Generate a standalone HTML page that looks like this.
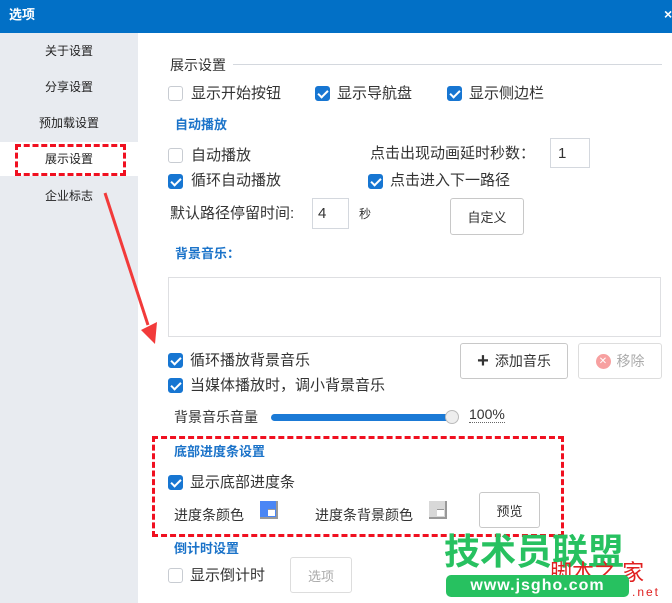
<!DOCTYPE html>
<html><head><meta charset="utf-8"><style>
*{margin:0;padding:0;box-sizing:border-box}
body{width:672px;height:603px;overflow:hidden;background:#fff;position:relative;font-family:"Liberation Sans","Noto Sans CJK SC",sans-serif;color:#333;font-size:15px}
.a{position:absolute;white-space:nowrap;line-height:18px}
.cb{position:absolute;width:15px;height:15px;border-radius:3px;border:1px solid #c8ccd2;background:#fff}
.cb.on{background:#1776d2;border-color:#1776d2}
.cb.on::after{content:"";position:absolute;left:4px;top:1px;width:4px;height:8px;border:solid #fff;border-width:0 2px 2px 0;transform:rotate(45deg)}
.blue{color:#1b73c9;font-weight:bold;font-size:13px}
.btn{position:absolute;border:1px solid #c8c8c8;border-radius:3px;background:#fff;display:flex;align-items:center;justify-content:center;font-size:13px;white-space:nowrap}
.side{position:absolute;left:0;width:138px;text-align:center;font-size:12px;color:#222;line-height:18px}
.sw::after{content:"";position:absolute;right:1px;bottom:1px;width:7px;height:6px;background:#fff;border-top:1px solid #999}
</style></head><body>
<div style="position:absolute;left:0;top:0;width:672px;height:33px;background:#0270c6"></div>
<div class="a" style="left:9px;top:6px;color:#fff;font-size:13px;font-weight:bold">选项</div>
<div class="a" style="left:664px;top:5px;color:#fff;font-size:14px;font-weight:bold">×</div>
<div style="position:absolute;left:0;top:33px;width:138px;height:570px;background:#e8ebf0"></div>
<div style="position:absolute;left:0;top:142px;width:138px;height:34px;background:#fff"></div>
<div class="side" style="top:42px">关于设置</div>
<div class="side" style="top:78px">分享设置</div>
<div class="side" style="top:114px">预加载设置</div>
<div class="side" style="top:150px">展示设置</div>
<div class="side" style="top:187px">企业标志</div>
<div style="position:absolute;left:15px;top:144px;width:111px;height:32px;border:3px dashed #f01020"></div>
<svg style="position:absolute;left:0;top:0" width="672" height="603"><line x1="105" y1="193" x2="148" y2="325" stroke="#f23a3a" stroke-width="3"/><polygon points="141,330 155,344 157,322" fill="#f23a3a"/></svg>

<div class="a" style="left:170px;top:56px;font-size:14px">展示设置</div>
<div style="position:absolute;left:233px;top:64px;width:429px;height:1px;background:#d4d8de"></div>
<div class="cb" style="left:168px;top:86px"></div><div class="a" style="left:191px;top:85px">显示开始按钮</div>
<div class="cb on" style="left:315px;top:86px"></div><div class="a" style="left:337px;top:85px">显示导航盘</div>
<div class="cb on" style="left:447px;top:86px"></div><div class="a" style="left:469px;top:85px">显示侧边栏</div>
<div class="a blue" style="left:175px;top:116px">自动播放</div>
<div class="cb" style="left:168px;top:148px"></div><div class="a" style="left:191px;top:147px">自动播放</div>
<div class="a" style="left:370px;top:145px">点击出现动画延时秒数：</div>
<div style="position:absolute;left:550px;top:138px;width:40px;height:30px;border:1px solid #d4d8de"></div><div class="a" style="left:558px;top:145px">1</div>
<div class="cb on" style="left:168px;top:174px"></div><div class="a" style="left:191px;top:172px">循环自动播放</div>
<div class="cb on" style="left:368px;top:174px"></div><div class="a" style="left:390px;top:172px">点击进入下一路径</div>
<div class="a" style="left:170px;top:205px">默认路径停留时间:</div>
<div style="position:absolute;left:312px;top:198px;width:37px;height:31px;border:1px solid #d4d8de"></div><div class="a" style="left:318px;top:205px">4</div>
<div class="a" style="left:359px;top:205px;font-size:12px">秒</div>
<div class="btn" style="left:450px;top:198px;width:74px;height:37px">自定义</div>
<div class="a blue" style="left:175px;top:245px">背景音乐：</div>
<div style="position:absolute;left:168px;top:277px;width:493px;height:60px;border:1px solid #dedfe2"></div>
<div class="cb on" style="left:168px;top:353px"></div><div class="a" style="left:190px;top:352px">循环播放背景音乐</div>
<div class="btn" style="left:460px;top:343px;width:108px;height:36px;font-size:14px"><b style="font-size:20px;margin-right:6px">+</b>添加音乐</div>
<div class="btn" style="left:578px;top:343px;width:84px;height:36px;color:#aaa;border-color:#ddd;font-size:14px"><span style="display:inline-block;width:15px;height:15px;border-radius:50%;background:#f7a0a0;color:#fff;font-size:10px;line-height:15px;text-align:center;margin-right:6px">✕</span>移除</div>
<div class="cb on" style="left:168px;top:378px"></div><div class="a" style="left:190px;top:377px">当媒体播放时，调小背景音乐</div>
<div class="a" style="left:174px;top:408px;font-size:14px">背景音乐音量</div>
<div style="position:absolute;left:271px;top:414px;width:184px;height:7px;border-radius:4px;background:#1b7ad6"></div>
<div style="position:absolute;left:445px;top:410px;width:14px;height:14px;border-radius:50%;background:#eee;border:1px solid #bbb"></div>
<div class="a" style="left:469px;top:406px;border-bottom:1px dotted #666;line-height:16px;font-size:14px">100%</div>
<div style="position:absolute;left:152px;top:436px;width:412px;height:101px;border:3px dashed #f01020"></div>
<div class="a blue" style="left:174px;top:443px">底部进度条设置</div>
<div class="cb on" style="left:168px;top:475px"></div><div class="a" style="left:190px;top:474px">显示底部进度条</div>
<div class="a" style="left:174px;top:506px;font-size:14px">进度条颜色</div>
<div class="sw" style="position:absolute;left:260px;top:501px;width:18px;height:18px;background:#4a86f5;border-right:2px solid #999;border-bottom:2px solid #999"></div>
<div class="a" style="left:315px;top:506px;font-size:14px">进度条背景颜色</div>
<div class="sw" style="position:absolute;left:429px;top:501px;width:18px;height:18px;background:#d8d8d8;border-right:2px solid #999;border-bottom:2px solid #999"></div>
<div class="btn" style="left:479px;top:492px;width:61px;height:36px">预览</div>
<div class="a blue" style="left:174px;top:540px">倒计时设置</div>
<div class="cb" style="left:168px;top:568px"></div><div class="a" style="left:190px;top:567px">显示倒计时</div>
<div class="btn" style="left:290px;top:557px;width:62px;height:36px;color:#aaa;border-color:#ddd">选项</div>
<div class="a" style="left:444px;top:532px;font-size:36px;line-height:40px;font-weight:bold;color:#27c160">技术员联盟</div>
<div class="a" style="left:550px;top:560px;font-size:22px;color:#e02020;line-height:26px">脚本之 家</div>
<div style="position:absolute;left:446px;top:575px;width:183px;height:22px;border-radius:5px;background:#27c160;color:#fff;font-weight:bold;font-size:16px;text-align:center;line-height:22px;letter-spacing:1px">www.jsgho.com</div>
<div class="a" style="left:632px;top:583px;color:#e02020;font-size:12px;letter-spacing:2px">.net</div>
</body></html>
